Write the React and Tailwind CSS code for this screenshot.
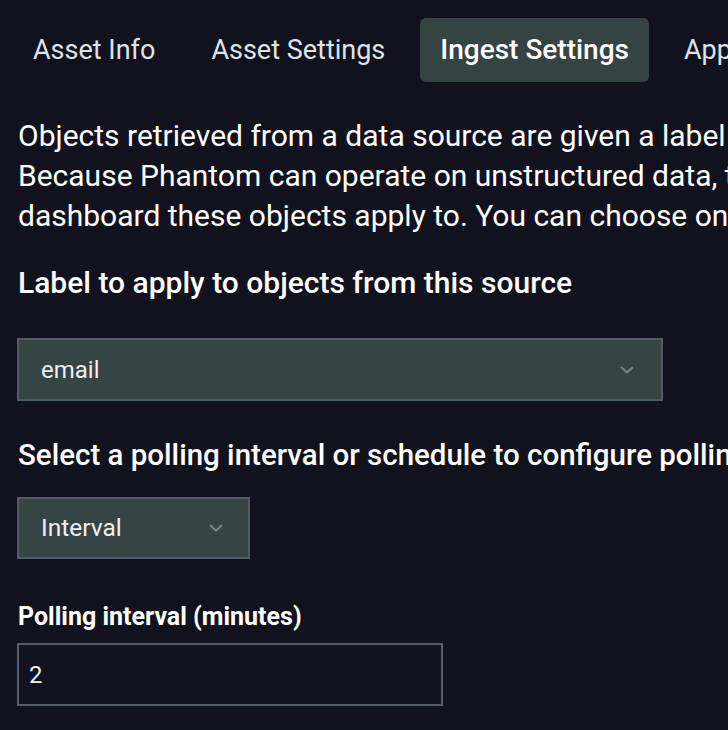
const tabs = ['Asset Info', 'Asset Settings', 'Ingest Settings', 'App']

function Chevron({ className }) {
  return (
    <svg className={className} width="14" height="8" viewBox="0 0 14 8" fill="none">
      <path d="M1 1l6 5.5L13 1" stroke="#7d838c" strokeWidth="2" />
    </svg>
  )
}

export default function App() {
  return (
    <div className="w-[728px] h-[730px] overflow-hidden bg-[#12121f] text-white font-['Roboto',sans-serif]">
      <div className="flex items-center pt-[18px] pl-[12px] gap-[14px] whitespace-nowrap">
        {tabs.map(t => (
          <div
            key={t}
            className={
              t === 'Ingest Settings'
                ? 'h-[64px] px-[20px] flex items-center rounded-[6px] bg-[#364343] text-[28px] font-medium text-white'
                : 'h-[64px] px-[21px] flex items-center text-[27px] text-[#dfe3e8]'
            }
          >
            {t}
          </div>
        ))}
      </div>

      <div className="pl-[18px]">
        <p className="mt-[34px] text-[30px] leading-[40px] whitespace-nowrap">
          Objects retrieved from a data source are given a label
          <br />
          Because Phantom can operate on unstructured data, the label helps you select which playbooks and
          <br />
          dashboard these objects apply to. You can choose one of the existing labels or create a new one.
        </p>

        <p className="mt-[27px] text-[30px] leading-[40px] font-medium whitespace-nowrap">
          Label to apply to objects from this source
        </p>

        <div className="mt-[35px] w-[646px] h-[63px] ml-[-1px] flex items-center justify-between pl-[22px] pr-[27px] bg-[#364444] border-2 border-[#4f5b67] text-[24px] text-[#eef0f2]">
          <span>email</span>
          <Chevron />
        </div>

        <p className="mt-[34px] text-[29.5px] leading-[40px] font-medium whitespace-nowrap">
          Select a polling interval or schedule to configure polling on this asset
        </p>

        <div className="mt-[22px] w-[233px] h-[62px] ml-[-1px] flex items-center justify-between pl-[22px] pr-[25px] bg-[#364444] border-2 border-[#4f5b67] text-[24.5px] text-[#eef0f2]">
          <span>Interval</span>
          <Chevron />
        </div>

        <p className="mt-[42px] text-[25px] leading-[32px] font-bold whitespace-nowrap">
          Polling interval (minutes)
        </p>

        <div className="mt-[10px] w-[426px] h-[63px] ml-[-1px] flex items-center pl-[10px] border-2 border-[#565e6a] text-[24px] text-[#eef0f2]">
          2
        </div>
      </div>
    </div>
  )
}
